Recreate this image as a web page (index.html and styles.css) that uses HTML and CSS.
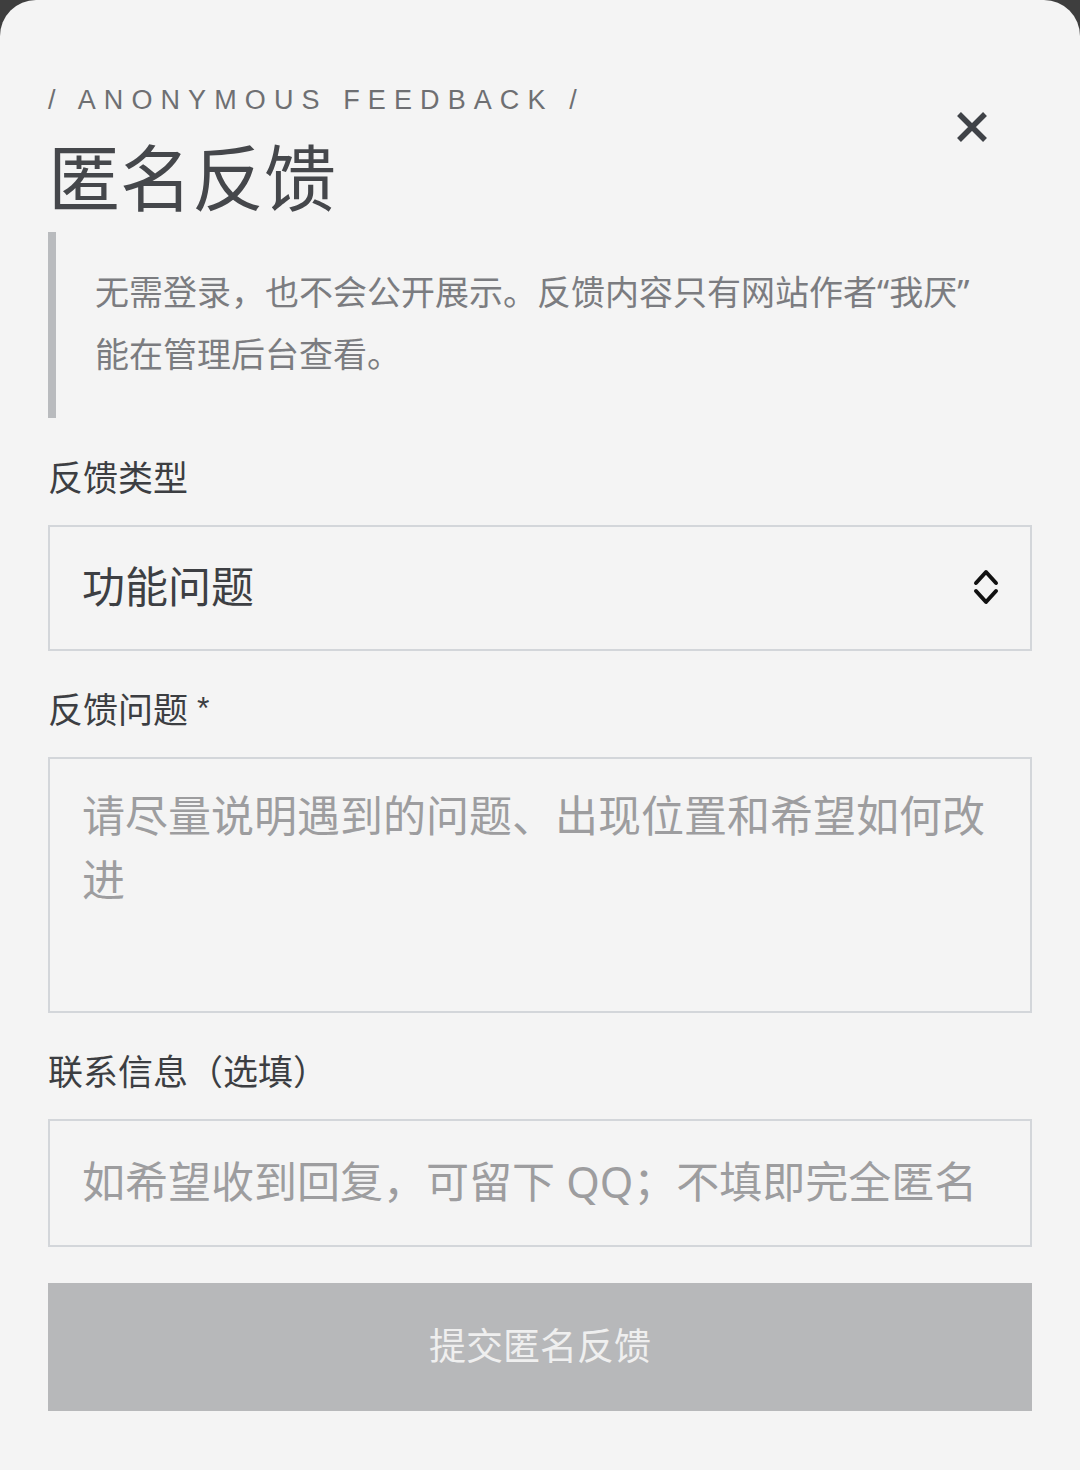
FILE: index.html
```html
<!DOCTYPE html>
<html lang="zh-CN">
<head>
<meta charset="utf-8">
<title>匿名反馈</title>
<link rel="stylesheet" href="styles.css">
</head>
<body>
<div class="modal">
  <div class="header">
    <div class="heading">
      <div class="eyebrow">/ ANONYMOUS FEEDBACK /</div>
      <h1 class="title">匿名反馈</h1>
    </div>
    <button class="close" aria-label="关闭">
      <svg width="36" height="36" viewBox="0 0 36 36"><path d="M5 5 L31 31 M31 5 L5 31" stroke="#3f4247" stroke-width="5.5" fill="none"/></svg>
    </button>
  </div>
  <blockquote class="note">无需登录，也不会公开展示。反馈内容只有网站作者“我厌”能在管理后台查看。</blockquote>

  <div class="field">
    <label class="label">反馈类型</label>
    <div class="box select">
      <span class="value">功能问题</span>
      <svg class="chev" width="28" height="38" viewBox="0 0 28 38"><path d="M4 14 L14 3 L24 14 M4 22 L14 33 L24 22" stroke="#111" stroke-width="4" fill="none" stroke-linecap="round" stroke-linejoin="round"/></svg>
    </div>
  </div>

  <div class="field">
    <label class="label">反馈问题 <span class="req">*</span></label>
    <div class="box textarea"><span class="ph">请尽量说明遇到的问题、出现位置和希望如何改进</span></div>
  </div>

  <div class="field">
    <label class="label">联系信息（选填）</label>
    <div class="box input"><span class="ph">如希望收到回复，可留下 QQ；不填即完全匿名</span></div>
  </div>

  <button class="submit">提交匿名反馈</button>
</div>
</body>
</html>
```
FILE: styles.css
```css
html, body {
  margin: 0;
  padding: 0;
  background: #3e3e3e;
}
body {
  font-family: "Noto Sans", "Noto Sans CJK SC", sans-serif;
}
.modal {
  box-sizing: border-box;
  width: 1080px;
  min-height: 1470px;
  background: #f4f4f4;
  border-radius: 36px 36px 0 0;
  padding: 82px 48px 40px 48px;
}
.header {
  display: flex;
  justify-content: space-between;
  align-items: flex-start;
}
.eyebrow {
  font-family: "Liberation Sans", Arial, sans-serif;
  font-size: 27px;
  line-height: 36px;
  letter-spacing: 0.3em;
  color: #6e6f72;
}
.title {
  margin: 13px 0 0 0;
  font-family: "Noto Sans CJK SC", sans-serif;
  font-size: 72px;
  line-height: 86px;
  font-weight: 400;
  color: #45474b;
}
.close {
  margin: 27px 42px 0 0;
  padding: 0;
  width: 36px;
  height: 36px;
  border: 0;
  background: none;
  display: flex;
}
.note {
  margin: 15px 0 0 0;
  border-left: 8px solid #b9bbbe;
  padding: 29px 40px 33px 39px;
  font-size: 34px;
  line-height: 62px;
  color: #7b7c80;
}
.field {
  margin-top: 38px;
  display: flex;
  flex-direction: column;
}
.field + .field {
  margin-top: 37px;
}
.label {
  font-size: 35px;
  line-height: 44px;
  padding-bottom: 4px;
  color: #3c3e42;
  margin-bottom: 21px;
}
.req {
  font-family: "Liberation Sans", Arial, sans-serif;
  font-size: 32px;
  line-height: 0;
  vertical-align: 4px;
}
.box {
  box-sizing: border-box;
  border: 2px solid #d3d6da;
  padding: 0 32px;
  font-size: 43px;
}
.select {
  height: 126px;
  display: flex;
  align-items: center;
  justify-content: space-between;
  padding-right: 30px;
}
.value {
  color: #3d3f43;
  padding-bottom: 8px;
}
.chev {
  display: block;
}
.textarea {
  height: 256px;
  padding-top: 25px;
  line-height: 64px;
}
.input {
  height: 128px;
  display: flex;
  align-items: center;
  padding-bottom: 8px;
}
.ph {
  color: #9d9d9f;
}
.submit {
  display: block;
  width: 100%;
  margin-top: 36px;
  height: 128px;
  padding: 0 0 6px 0;
  border: 0;
  background: #b7b8ba;
  color: #efefef;
  font-family: "Noto Sans CJK SC", sans-serif;
  font-size: 37px;
}
```
